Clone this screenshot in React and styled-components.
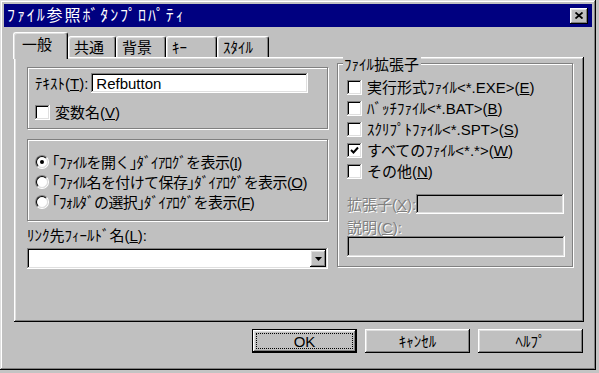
import React from "react";
import styled, { createGlobalStyle } from "styled-components";

const GlobalStyle = createGlobalStyle`
  body {
    margin: 0;
    background: #c4c4c4;
  }
`;

const FONT = `"Liberation Sans", "Noto Sans CJK JP", sans-serif`;

const RAISED = `inset -1px -1px #000, inset 1px 1px #fff, inset -2px -2px #808080, inset 2px 2px #dfdfdf`;
const SUNKEN = `inset -1px -1px #fff, inset 1px 1px #808080, inset -2px -2px #dfdfdf, inset 2px 2px #000`;

const Window = styled.div`
  box-sizing: border-box;
  width: 596px;
  height: 370px;
  padding: 4px;
  display: flex;
  flex-direction: column;
  background: #c0c0c0;
  box-shadow: inset -1px -1px #000, inset 1px 1px #dfdfdf, inset -2px -2px #808080, inset 2px 2px #fff;
  font-family: ${FONT};
  font-size: 15px;
  line-height: 17px;
  color: #000;
`;

const TitleBar = styled.div`
  height: 23px;
  padding: 0 4px 0 3px;
  display: flex;
  align-items: center;
  background: #000080;
  color: #fff;
  font-size: 16px;
  letter-spacing: 1.9px;
`;

const CloseButton = styled.div`
  box-sizing: border-box;
  width: 18px;
  height: 16px;
  margin-left: auto;
  display: flex;
  align-items: center;
  justify-content: center;
  background: #c0c0c0;
  box-shadow: ${RAISED};
`;

const Body = styled.div`
  padding: 5px 8px 0 10px;
  display: flex;
  flex-direction: column;
`;

const TabRow = styled.div`
  height: 25px;
  margin-left: -1px;
  display: flex;
  align-items: flex-end;
  position: relative;
  z-index: 1;
`;

const Tab = styled.div`
  box-sizing: border-box;
  width: ${(p) => p.$w}px;
  height: ${(p) => (p.$active ? 27 : 21)}px;
  margin-bottom: ${(p) => (p.$active ? -2 : 0)}px;
  padding: 0 0 ${(p) => (p.$active ? 3 : 0)}px ${(p) => (p.$active ? 8 : 5)}px;
  display: flex;
  align-items: center;
  background: #c0c0c0;
  border-top: 1px solid #fff;
  border-left: 1px solid #fff;
  border-right: 1px solid #000;
  border-radius: 3px 3px 0 0;
  box-shadow: inset -1px 0 #808080, inset 1px 1px #dfdfdf;
`;

const Panel = styled.div`
  box-sizing: border-box;
  height: 265px;
  padding: 8px 11px 0 13px;
  display: flex;
  gap: 9px;
  background: #c0c0c0;
  box-shadow: ${RAISED};
`;

const Column = styled.div`
  width: 301px;
  display: flex;
  flex-direction: column;
`;

const Group = styled.div`
  box-sizing: border-box;
  width: ${(p) => p.$w}px;
  height: ${(p) => p.$h}px;
  margin-top: ${(p) => p.$mt || 0}px;
  padding: ${(p) => p.$pad};
  display: flex;
  flex-direction: column;
  border: 1px solid #808080;
  box-shadow: inset 1px 1px #fff, 1px 1px #fff;
`;

const Legend = styled.div`
  align-self: flex-start;
  margin: -16px 0 0 -4px;
  padding: 0 2px 0 1px;
  background: #c0c0c0;
`;

const Row = styled.div`
  height: ${(p) => p.$h || 20}px;
  margin-top: ${(p) => p.$mt || 0}px;
  display: flex;
  align-items: center;
  white-space: nowrap;
`;

const Label = styled.span`
  color: ${(p) => (p.$disabled ? "#808080" : "#000")};
  text-shadow: ${(p) => (p.$disabled ? "1px 1px 0 #fff" : "none")};
  letter-spacing: ${(p) => p.$ls || 0}px;
  white-space: nowrap;
`;

const Field = styled.div`
  box-sizing: border-box;
  width: ${(p) => p.$w}px;
  height: ${(p) => p.$h}px;
  margin-left: ${(p) => p.$ml || 0}px;
  padding: 0 2px 0 5px;
  display: flex;
  align-items: center;
  background: ${(p) => (p.$disabled ? "#c0c0c0" : "#fff")};
  box-shadow: ${SUNKEN};
`;

const DropButton = styled.div`
  box-sizing: border-box;
  width: 16px;
  height: 17px;
  margin-left: auto;
  display: flex;
  align-items: center;
  justify-content: center;
  background: #c0c0c0;
  box-shadow: ${RAISED};
`;

const Box = styled.div`
  box-sizing: border-box;
  flex: none;
  width: 15px;
  height: 15px;
  margin-right: 5px;
  display: flex;
  align-items: center;
  justify-content: center;
  background: #fff;
  box-shadow: ${SUNKEN};
`;

const RadioOuter = styled.div`
  box-sizing: border-box;
  flex: none;
  width: 14px;
  height: 14px;
  margin: 0 3px 0 1px;
  border-radius: 50%;
  border: 1px solid;
  border-color: #808080 #fff #fff #808080;
  display: flex;
`;

const RadioInner = styled.div`
  box-sizing: border-box;
  flex: 1;
  border-radius: 50%;
  border: 1px solid;
  border-color: #000 #dfdfdf #dfdfdf #000;
  background: #fff;
  display: flex;
  align-items: center;
  justify-content: center;
`;

const Dot = styled.div`
  width: 4px;
  height: 4px;
  border-radius: 50%;
  background: #000;
`;

const ButtonRow = styled.div`
  margin-top: 7px;
  padding-right: 1px;
  display: flex;
  justify-content: flex-end;
  gap: 8px;
`;

const Button = styled.div`
  box-sizing: border-box;
  width: 105px;
  height: 24px;
  display: flex;
  align-items: center;
  justify-content: center;
  background: #c0c0c0;
  border: ${(p) => (p.$default ? "1px solid #000" : "none")};
  box-shadow: ${RAISED};
  outline: ${(p) => (p.$default ? "1px dotted #000" : "none")};
  outline-offset: -5px;
`;

function Checkbox({ checked, children }) {
  return (
    <Row $h={21}>
      <Box>
        {checked && (
          <svg width="9" height="9" viewBox="0 0 9 9">
            <polyline points="1,4 3.5,6.5 8,1.5" fill="none" stroke="#000" strokeWidth="2" />
          </svg>
        )}
      </Box>
      <Label>{children}</Label>
    </Row>
  );
}

function Radio({ checked, children }) {
  return (
    <Row $h={20}>
      <RadioOuter>
        <RadioInner>{checked && <Dot />}</RadioInner>
      </RadioOuter>
      <Label $ls={-0.6}>{children}</Label>
    </Row>
  );
}

const tabs = [
  { label: "一般", w: 55, active: true },
  { label: "共通", w: 48 },
  { label: "背景", w: 50 },
  { label: "ｷｰ", w: 51 },
  { label: "ｽﾀｲﾙ", w: 52 },
];

export default function App() {
  return (
    <>
      <GlobalStyle />
      <Window>
        <TitleBar>
          ﾌｧｲﾙ参照ﾎﾞﾀﾝﾌﾟﾛﾊﾟﾃｨ
          <CloseButton>
            <svg width="8" height="7" viewBox="0 0 8 7">
              <path d="M0.5 0.5 L7.5 6.5 M7.5 0.5 L0.5 6.5" stroke="#000" strokeWidth="1.8" />
            </svg>
          </CloseButton>
        </TitleBar>
        <Body>
          <TabRow>
            {tabs.map((t) => (
              <Tab key={t.label} $w={t.w} $active={t.active}>
                {t.label}
              </Tab>
            ))}
          </TabRow>
          <Panel>
            <Column>
              <Group $w={301} $h={62} $mt={2} $pad="5px 0 0 7px">
                <Row $h={20}>
                  <Label>
                    ﾃｷｽﾄ(<u>T</u>):
                  </Label>
                  <Field $w={217} $h={20} $ml={3}>
                    Refbutton
                  </Field>
                </Row>
                <Row $h={15} $mt={12}>
                  <Box />
                  <Label>
                    変数名(<u>V</u>)
                  </Label>
                </Row>
              </Group>
              <Group $w={301} $h={82} $mt={10} $pad="12px 0 0 6px">
                <Radio checked>
                  ｢ﾌｧｲﾙを開く｣ﾀﾞｲｱﾛｸﾞを表示(<u>I</u>)
                </Radio>
                <Radio>
                  ｢ﾌｧｲﾙ名を付けて保存｣ﾀﾞｲｱﾛｸﾞを表示(<u>O</u>)
                </Radio>
                <Radio>
                  ｢ﾌｫﾙﾀﾞの選択｣ﾀﾞｲｱﾛｸﾞを表示(<u>F</u>)
                </Radio>
              </Group>
              <Row $h={17} $mt={6}>
                <Label>
                  ﾘﾝｸ先ﾌｨｰﾙﾄﾞ名(<u>L</u>):
                </Label>
              </Row>
              <Field $w={301} $h={21} style={{ marginTop: 4 }}>
                <DropButton>
                  <svg width="7" height="4" viewBox="0 0 7 4">
                    <path d="M0 0 H7 L3.5 4 Z" fill="#000" />
                  </svg>
                </DropButton>
              </Field>
            </Column>
            <Group $w={236} $h={204} $mt={-2} $pad="8px 8px 0 9px">
              <Legend>ﾌｧｲﾙ拡張子</Legend>
              <Row $h={4} />
              <Checkbox>
                実行形式ﾌｧｲﾙ&lt;*.EXE&gt;(<u>E</u>)
              </Checkbox>
              <Checkbox>
                ﾊﾞｯﾁﾌｧｲﾙ&lt;*.BAT&gt;(<u>B</u>)
              </Checkbox>
              <Checkbox>
                ｽｸﾘﾌﾟﾄﾌｧｲﾙ&lt;*.SPT&gt;(<u>S</u>)
              </Checkbox>
              <Checkbox checked>
                すべてのﾌｧｲﾙ&lt;*.*&gt;(<u>W</u>)
              </Checkbox>
              <Checkbox>
                その他(<u>N</u>)
              </Checkbox>
              <Row $h={20} $mt={12}>
                <Label $disabled>
                  拡張子(<u>X</u>):
                </Label>
                <Field $w={151} $h={20} $disabled style={{ marginLeft: "auto" }} />
              </Row>
              <Row $h={17} $mt={5}>
                <Label $disabled>
                  説明(<u>C</u>):
                </Label>
              </Row>
              <Field $w={218} $h={21} $disabled />
            </Group>
          </Panel>
          <ButtonRow>
            <Button $default>OK</Button>
            <Button>ｷｬﾝｾﾙ</Button>
            <Button>ﾍﾙﾌﾟ</Button>
          </ButtonRow>
        </Body>
      </Window>
    </>
  );
}
